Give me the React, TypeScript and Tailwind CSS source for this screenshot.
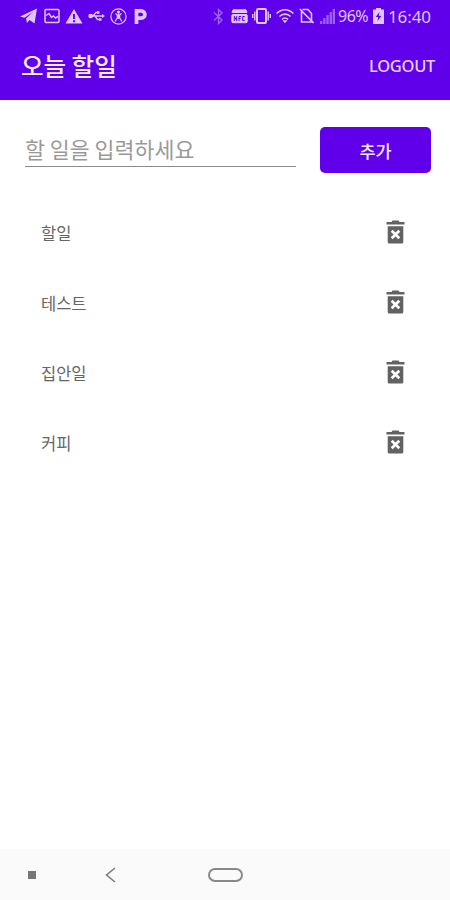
import { useState } from 'react';

const initialTodos = ['할일', '테스트', '집안일', '커피'];

export default function App() {
  const [todos, setTodos] = useState(initialTodos);
  const [text, setText] = useState('');

  const addTodo = () => {
    if (!text.trim()) return;
    setTodos([...todos, text.trim()]);
    setText('');
  };

  return (
    <div className="flex h-[900px] w-[450px] flex-col overflow-hidden bg-white font-['Noto_Sans_CJK_KR',sans-serif]">
      <div className="h-[100px] shrink-0 bg-[#6000eb]">
        <StatusBar />
        <header className="flex h-[68px] items-center justify-between pl-[21px] pr-[15px] text-white">
          <h1 className="text-[24.5px] font-medium leading-none text-[#f7ecff]">오늘 할일</h1>
          <button className="font-['Noto_Sans',sans-serif] text-[16.5px] font-medium leading-none tracking-[-0.3px] text-[#e6d0ff]">LOGOUT</button>
        </header>
      </div>

      <div className="flex items-start pl-[25px] pr-[19px] pt-[27px]">
        <input
          className="h-10 w-[271px] border-b-[1.5px] border-[#8b8b8b] pt-1 text-[21.7px] leading-none text-[#555] outline-none placeholder:text-[#999]"
          placeholder="할 일을 입력하세요"
          value={text}
          onChange={(e) => setText(e.target.value)}
        />
        <button onClick={addTodo} className="ml-6 flex h-[46px] w-[111px] items-center justify-center rounded-[5px] bg-[#6000eb] pt-0.5 text-[17.5px] font-medium leading-none text-[#f2e5ff]">
          추가
        </button>
      </div>

      <ul className="mt-6 flex-1">
        {todos.map((todo, i) => (
          <li key={i} className="flex h-[70px] items-center justify-between pl-[41px] pr-[45px]">
            <span className="pt-0.5 text-[16.5px] leading-none text-[#666]">{todo}</span>
            <button onClick={() => setTodos(todos.filter((_, n) => n !== i))}>
              <TrashIcon />
            </button>
          </li>
        ))}
      </ul>

      <NavBar />
    </div>
  );
}

function TrashIcon() {
  return (
    <svg className="h-6 w-[19px]" viewBox="0 0 19 24">
      <path d="M.5 2h5L6.5.6h6L13.5 2h5v2.4H.5ZM1.7 6.2h15.6V22a1.5 1.5 0 0 1-1.5 1.5H3.2A1.5 1.5 0 0 1 1.7 22Z" fill="#626262" />
      <path d="m5.7 10.7 7.6 7.6M13.3 10.7l-7.6 7.6" stroke="white" strokeWidth="2.7" />
    </svg>
  );
}

function StatusBar() {
  return (
    <div className="flex h-8 items-center pl-5 font-['Noto_Sans',sans-serif] text-[#dfc6ff]">
      <svg className="h-[18px] w-[18px]" viewBox="0 0 18 18" fill="currentColor">
        <path d="M0 9.5 17 1.5 14.5 16.5 9.5 13 7 16 6 11.5 13 5 4.5 10.8Z" />
      </svg>
      <svg className="ml-1.5 h-4 w-4" viewBox="0 0 16 16" fill="none" stroke="currentColor" strokeWidth="1.5">
        <rect x="1" y="1.5" width="14" height="13" rx="1" />
        <path d="M2 7.5 5 5.5 7.5 9.5 9.5 8 11.5 10 14 8.5" />
      </svg>
      <svg className="ml-[5px] h-[17px] w-[18px]" viewBox="0 0 18 17">
        <path d="M9 1 17.5 15.5H.5Z" fill="currentColor" />
        <path d="M9 6v5M9 12.3v2" stroke="#6000eb" strokeWidth="1.9" />
      </svg>
      <svg className="ml-[5px] h-4 w-[17px]" viewBox="0 0 17 16" fill="none" stroke="currentColor" strokeWidth="1.3">
        <circle cx="2.7" cy="8" r="1.7" fill="currentColor" />
        <path d="M3 8h12M5 8l3-3.5h2M7 8l2.5 3.5H12" />
        <path d="M14 6l3 2-3 2zM9 3.2h2.5v2.5H9zM11 10.3h2.5v2.5H11z" fill="currentColor" stroke="none" />
      </svg>
      <svg className="ml-[5px] h-[17px] w-[17px]" viewBox="0 0 17 17" fill="none" stroke="currentColor" strokeWidth="1.2">
        <circle cx="8.5" cy="8.5" r="7.6" />
        <circle cx="8.5" cy="4" r="1" fill="currentColor" />
        <path d="M5.5 5.5 7.3 7v3L5 13.5M11.5 5.5 9.7 7v3l2.3 3.5M8.5 5.5V11" />
      </svg>
      <svg className="ml-[7px] h-[17px] w-[14px]" viewBox="0 0 14 17">
        <path d="M2.5 16V2.9H7.3a3.5 3.5 0 0 1 0 7.2H4" fill="none" stroke="currentColor" strokeWidth="3.7" />
      </svg>

      <svg className="ml-[65px] h-[17px] w-[11px] opacity-50" viewBox="0 0 11 17" fill="none" stroke="currentColor" strokeWidth="1.4">
        <path d="M1 4.5 9 12 5.5 15.5V1.5L9 5 1 12.5" />
      </svg>
      <svg className="ml-[7px] h-[15px] w-[17px]" viewBox="0 0 17 15" fill="none" stroke="currentColor">
        <path d="M2 .8h13l1 2.7H1Z" fill="currentColor" />
        <rect x=".8" y="5.5" width="15.4" height="8.2" rx="1" fill="currentColor" />
        <path d="M3.3 12V7.3l2.4 4.3V7M8 12V7.5h2M8 9.5h1.6M13.7 7.5h-2v4h2" stroke="#6000eb" />
      </svg>
      <svg className="ml-1 h-4 w-[19px]" viewBox="0 0 19 16" fill="none" stroke="currentColor" strokeWidth="2">
        <rect x="5" y="1" width="9" height="14" rx="1" />
        <path d="M2.8 3.5v9M16.2 3.5v9M.7 6v4M18.3 6v4" strokeWidth="1.4" />
      </svg>
      <svg className="ml-[5px] h-4 w-[18px]" viewBox="0 0 18 16" fill="none" stroke="currentColor" strokeWidth="1.6">
        <path d="M.7 5.5C5.5.5 12.5.5 17.3 5.5M3.4 8.5c3.2-3.2 8-3.2 11.2 0M6 11.3c1.8-1.6 4.2-1.6 6 0" />
        <path d="m6.5 12.3 2.5 3 2.5-3Z" fill="currentColor" stroke="none" />
      </svg>
      <svg className="ml-[5px] h-4 w-[15px]" viewBox="0 0 15 16" fill="none" stroke="currentColor" strokeWidth="1.6">
        <path d="M3.5 1.5H9l3.5 4V14h-10V3.5M.8 1 14.5 15" />
      </svg>
      <svg className="ml-[6px] h-4 w-[15px] opacity-50" viewBox="0 0 15 16" fill="currentColor">
        <path d="M0 13h2.3v3H0zM3.2 10h2.3v6H3.2zM6.4 7h2.3v9H6.4zM9.6 4h2.3v12H9.6zM12.7 1H15v15h-2.3z" />
      </svg>
      <span className="ml-[3px] w-[33px] whitespace-nowrap text-[16px] leading-none tracking-[-0.5px]">96%</span>
      <svg className="ml-0.5 h-4 w-[11px]" viewBox="0 0 11 16">
        <path d="M3 0h5v1.5h3V16H0V1.5h3Z" fill="currentColor" />
        <path d="M6.5 4 2.7 9h2.5l-.7 4L8.3 8H5.8Z" fill="#6000eb" />
      </svg>
      <span className="ml-1 whitespace-nowrap text-[17px] leading-none tracking-[-0.1px]">16:40</span>
    </div>
  );
}

function NavBar() {
  return (
    <nav className="flex h-[51px] shrink-0 items-center bg-[#fafafa] pl-7">
      <div className="h-2 w-2 bg-[#777]" />
      <svg className="ml-[69px] h-4 w-[11px]" viewBox="0 0 11 16" fill="none" stroke="#777" strokeWidth="1.5">
        <path d="M10 1 1.5 8 10 15" />
      </svg>
      <div className="ml-[92px] h-[14px] w-[35px] rounded-full border-2 border-[#888]" />
    </nav>
  );
}
